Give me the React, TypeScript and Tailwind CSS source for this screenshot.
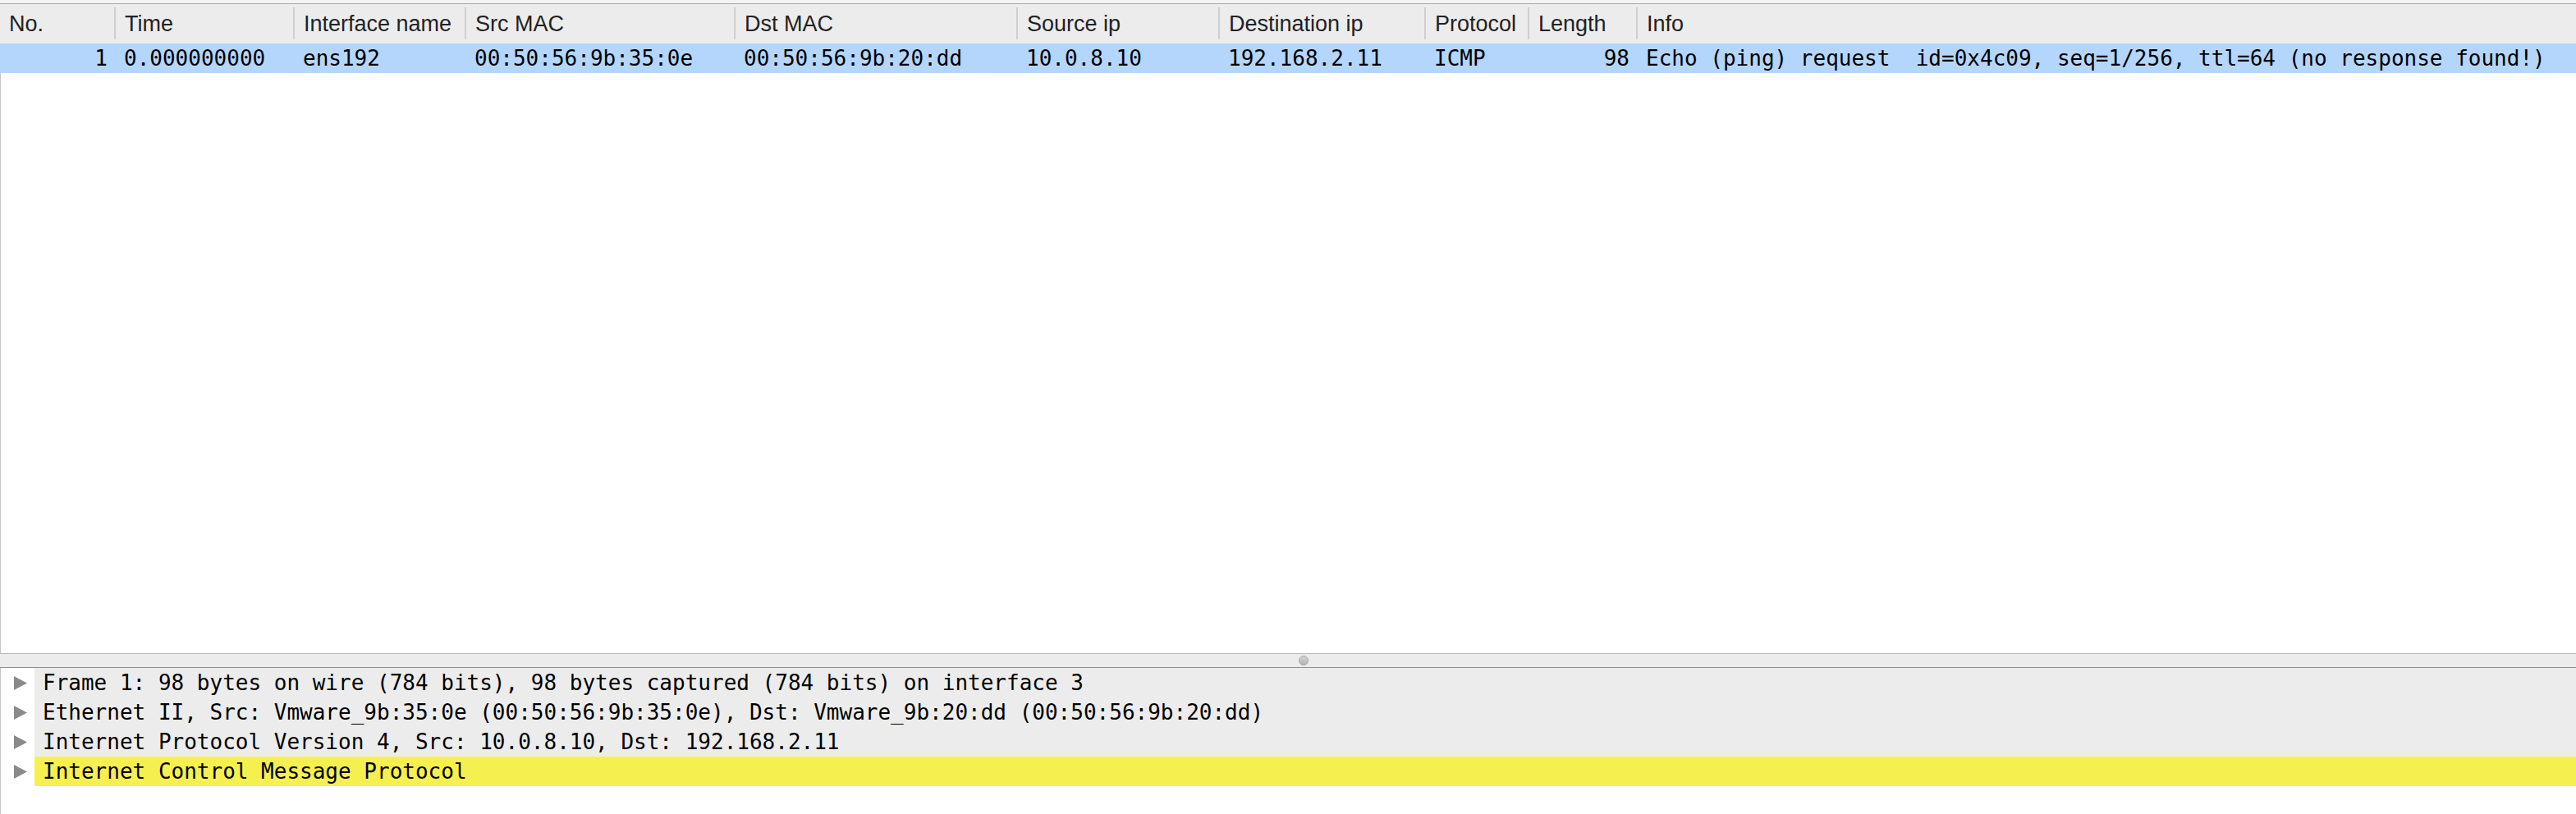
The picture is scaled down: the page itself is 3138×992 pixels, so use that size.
import React from 'react';

const sans = { fontFamily: '"Liberation Sans", Arial, sans-serif' };
const mono = { fontFamily: '"DejaVu Sans Mono", monospace' };

const columns = [
  { name: 'No.', width: 'w-[141px]', value: '1', right: true },
  { name: 'Time', width: 'w-[218px]', value: '0.000000000' },
  { name: 'Interface name', width: 'w-[209px]', value: 'ens192' },
  { name: 'Src MAC', width: 'w-[328px]', value: '00:50:56:9b:35:0e' },
  { name: 'Dst MAC', width: 'w-[344px]', value: '00:50:56:9b:20:dd' },
  { name: 'Source ip', width: 'w-[246px]', value: '10.0.8.10' },
  { name: 'Destination ip', width: 'w-[251px]', value: '192.168.2.11' },
  { name: 'Protocol', width: 'w-[126px]', value: 'ICMP' },
  { name: 'Length', width: 'w-[132px]', value: '98', right: true },
  {
    name: 'Info',
    width: 'flex-1',
    value: 'Echo (ping) request  id=0x4c09, seq=1/256, ttl=64 (no response found!)',
  },
];

const details = [
  'Frame 1: 98 bytes on wire (784 bits), 98 bytes captured (784 bits) on interface 3',
  'Ethernet II, Src: Vmware_9b:35:0e (00:50:56:9b:35:0e), Dst: Vmware_9b:20:dd (00:50:56:9b:20:dd)',
  'Internet Protocol Version 4, Src: 10.0.8.10, Dst: 192.168.2.11',
  'Internet Control Message Protocol',
];

function Arrow() {
  return (
    <svg width="16" height="17" viewBox="0 0 16 17">
      <polygon points="0,0 16,8.5 0,17" fill="#8a8a8a" />
    </svg>
  );
}

export default function App() {
  return (
    <div className="w-[3138px] h-[992px] flex flex-col bg-white overflow-hidden">
      {/* Packet list */}
      <div className="h-[4px] bg-[#f4f4f4] border-b border-[#a8a8a8] box-content" />
      <div className="h-[48px] flex bg-[#ececec] text-[27px] text-[#222]" style={sans}>
        {columns.map((col, i) => (
          <div key={col.name} className={`${col.width} flex items-center relative pl-[11px] shrink-0`}>
            <span className="leading-none">{col.name}</span>
            {i < columns.length - 1 && (
              <div className="absolute right-0 top-[4px] bottom-[5px] w-[2px] bg-[#cfcfcf]" />
            )}
          </div>
        ))}
      </div>
      <div className="h-[36px] flex bg-[#b4d6fc] text-[26px] text-black" style={mono}>
        {columns.map((col) => (
          <div
            key={col.name}
            className={`${col.width} flex items-center shrink-0 whitespace-pre ${col.right ? 'justify-end pr-[10px]' : 'pl-[10px]'}`}
          >
            {col.value}
          </div>
        ))}
      </div>
      <div className="flex-1 border-l border-[#c6c6c6]" />

      {/* Splitter */}
      <div className="h-[16px] bg-[#ececec] border-y border-t-[#b9b9b9] border-b-[#8f8f8f] box-content flex items-center justify-center">
        <div className="w-[12px] h-[12px] rounded-full bg-gradient-to-b from-[#d4d4d4] to-[#b4b4b4] border border-[#a6a6a6] ml-[38px]" />
      </div>

      {/* Packet details */}
      <div className="h-[178px] flex flex-col border-l border-[#c6c6c6] text-[26px] text-black" style={mono}>
        {details.map((line, i) => (
          <div key={line} className="h-[36px] flex">
            <div className="w-[41px] flex items-center pl-[16px] bg-white">
              <Arrow />
            </div>
            <div
              className={`flex-1 flex items-center pl-[10px] whitespace-pre ${i === details.length - 1 ? 'bg-[#f5f050]' : 'bg-[#ececec]'}`}
            >
              {line}
            </div>
          </div>
        ))}
      </div>
    </div>
  );
}
